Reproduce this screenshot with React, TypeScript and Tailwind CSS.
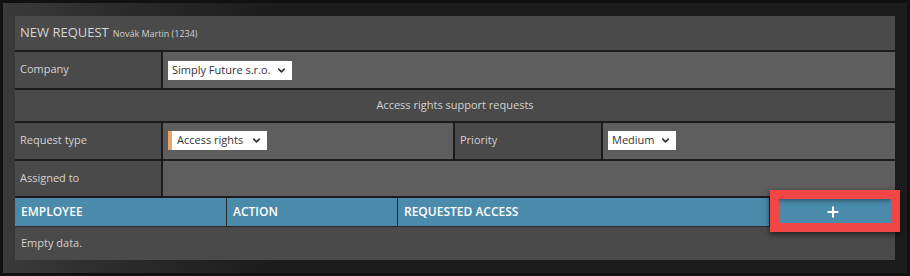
import { ChevronDown, Plus } from 'lucide-react'

const font = { fontFamily: '"Open Sans", "Noto Sans", sans-serif' }

function Select({ value, accent, wide }: { value: string; accent?: boolean; wide?: boolean }) {
  return (
    <div
      className={
        'flex h-[19px] items-center bg-white pr-[5px] text-[11px] text-[#333] ' +
        (wide ? 'gap-[8px] ' : 'gap-[5px] ') +
        (accent ? 'border-l-[4px] border-[#e8a46a] pl-[5px]' : 'pl-[4px]')
      }
    >
      <span>{value}</span>
      <ChevronDown className="h-[11px] w-[11px]" strokeWidth={3.5} color="#333" />
    </div>
  )
}

function Label({ children }: { children: React.ReactNode }) {
  return (
    <div className="flex items-start bg-[#4a4a4a] px-[5px] pt-[9px] text-[11px] text-[#d2d2d2]">
      {children}
    </div>
  )
}

export default function App() {
  return (
    <div className="h-[276px] w-[910px] bg-[#111] p-[3px]" style={font}>
      <div className="h-full w-full bg-[linear-gradient(90deg,#3a3a3a_0%,#2c2c2c_12%,#1c1c1c_30%)] px-[12px] pb-[13px] pt-[13px]">
        <div className="flex h-full flex-col gap-[2px] bg-[#1c1c1c]">
          {/* title */}
          <div className="flex h-[34px] items-center bg-[#4a4a4a] px-[5px] text-[#d4d4d4]">
            <span className="text-[13px]">NEW REQUEST</span>
            <span className="ml-[4px] mt-[2px] text-[9px] text-[#cfcfcf]">Novák Martin (1234)</span>
          </div>

          {/* company */}
          <div className="grid h-[36px] grid-cols-[146px_1fr] gap-[2px]">
            <Label>Company</Label>
            <div className="flex items-center bg-[#5e5e5e] px-[5px]">
              <Select value="Simply Future s.r.o." />
            </div>
          </div>

          {/* section */}
          <div className="flex h-[31px] items-center justify-center bg-[#4a4a4a] text-[11px] text-[#d2d2d2]">
            Access rights support requests
          </div>

          {/* request type / priority */}
          <div className="grid h-[36px] grid-cols-[146px_290px_146px_1fr] gap-[2px]">
            <Label>Request type</Label>
            <div className="flex items-start bg-[#5e5e5e] px-[5px] pt-[8px]">
              <Select value="Access rights" accent wide />
            </div>
            <Label>Priority</Label>
            <div className="flex items-start bg-[#5e5e5e] px-[5px] pt-[8px]">
              <Select value="Medium" />
            </div>
          </div>

          {/* assigned */}
          <div className="grid h-[35px] grid-cols-[146px_1fr] gap-[2px]">
            <Label>Assigned to</Label>
            <div className="bg-[#5e5e5e]" />
          </div>

          {/* table */}
          <div className="flex flex-1 flex-col">
            <div className="relative grid h-[29px] grid-cols-[211px_170px_371px_1fr] gap-[1px] border-b border-[#2a2a2a] bg-[#2a2a2a] text-[12px] font-semibold text-white">
              <div className="flex items-center bg-[#4a8aaa] px-[6px]">EMPLOYEE</div>
              <div className="flex items-center bg-[#4a8aaa] px-[6px]">ACTION</div>
              <div className="flex items-center bg-[#4a8aaa] px-[6px]">REQUESTED ACCESS</div>
              <div className="flex items-center justify-center bg-[#4a8aaa] shadow-[inset_0_3px_4px_rgba(0,0,0,0.35)]">
                <Plus className="h-[16px] w-[16px]" strokeWidth={3} />
              </div>
              <div className="absolute left-[755px] top-[-8px] h-[42px] w-[130px] border-[9px] border-[#f24646] shadow-[0_2px_6px_rgba(0,0,0,0.6)]" />
            </div>
            <div className="flex flex-1 items-center bg-[#4a4a4a] px-[6px] text-[11px] text-[#d2d2d2]">
              Empty data.
            </div>
          </div>
        </div>
      </div>
    </div>
  )
}
